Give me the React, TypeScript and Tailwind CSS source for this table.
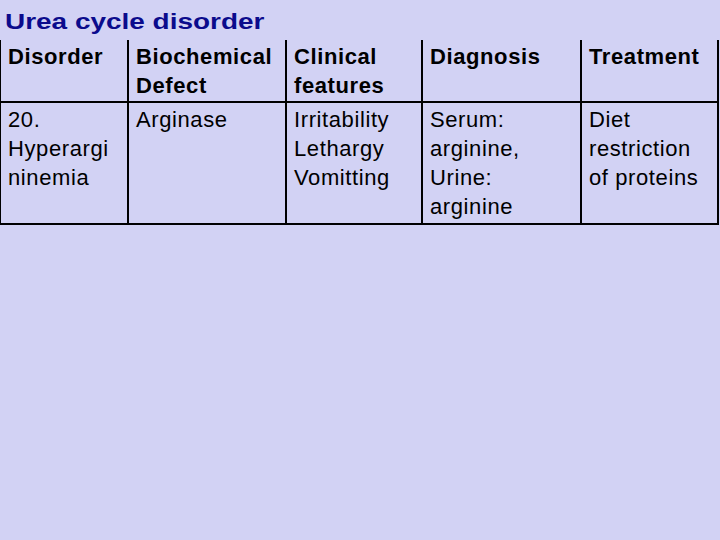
import React from "react";

const header = [
  ["Disorder"],
  ["Biochemical", "Defect"],
  ["Clinical", "features"],
  ["Diagnosis"],
  ["Treatment"],
];

const body = [
  ["20.", "Hyperargi", "ninemia"],
  ["Arginase"],
  ["Irritability", "Lethargy", "Vomitting"],
  ["Serum:", "arginine,", "Urine:", "arginine"],
  ["Diet", "restriction", "of proteins"],
];

export default function App() {
  return (
    <div
      className="w-[720px] h-[540px] bg-[#d2d2f4] overflow-hidden"
      style={{ fontFamily: '"Liberation Sans", Arial, sans-serif' }}
    >
      <div className="h-[40px] pt-[8px] pl-[5px]">
        <span className="inline-block origin-left scale-x-[1.3] text-[21.5px] leading-[28px] font-bold text-[#0b0b8c]">
          Urea cycle disorder
        </span>
      </div>
      <div className="grid grid-cols-[127px_158px_136px_159px_139px] text-black text-[22px] leading-[29px] tracking-[0.6px]">
        {header.map((lines, i) => (
          <div
            key={"h" + i}
            className={
              "h-[63px] pt-[2px] pl-[7px] font-bold border-b-2 border-black " +
              (i === 0 ? "border-l" : "border-l-2") +
              (i === 4 ? " border-r-2" : "")
            }
          >
            {lines.map((l) => (
              <div key={l} className="whitespace-nowrap">
                {l}
              </div>
            ))}
          </div>
        ))}
        {body.map((lines, i) => (
          <div
            key={"b" + i}
            className={
              "h-[122px] pt-[2px] pl-[7px] border-b-2 border-black " +
              (i === 0 ? "border-l" : "border-l-2") +
              (i === 4 ? " border-r-2" : "")
            }
          >
            {lines.map((l) => (
              <div key={l} className="whitespace-nowrap">
                {l}
              </div>
            ))}
          </div>
        ))}
      </div>
    </div>
  );
}
